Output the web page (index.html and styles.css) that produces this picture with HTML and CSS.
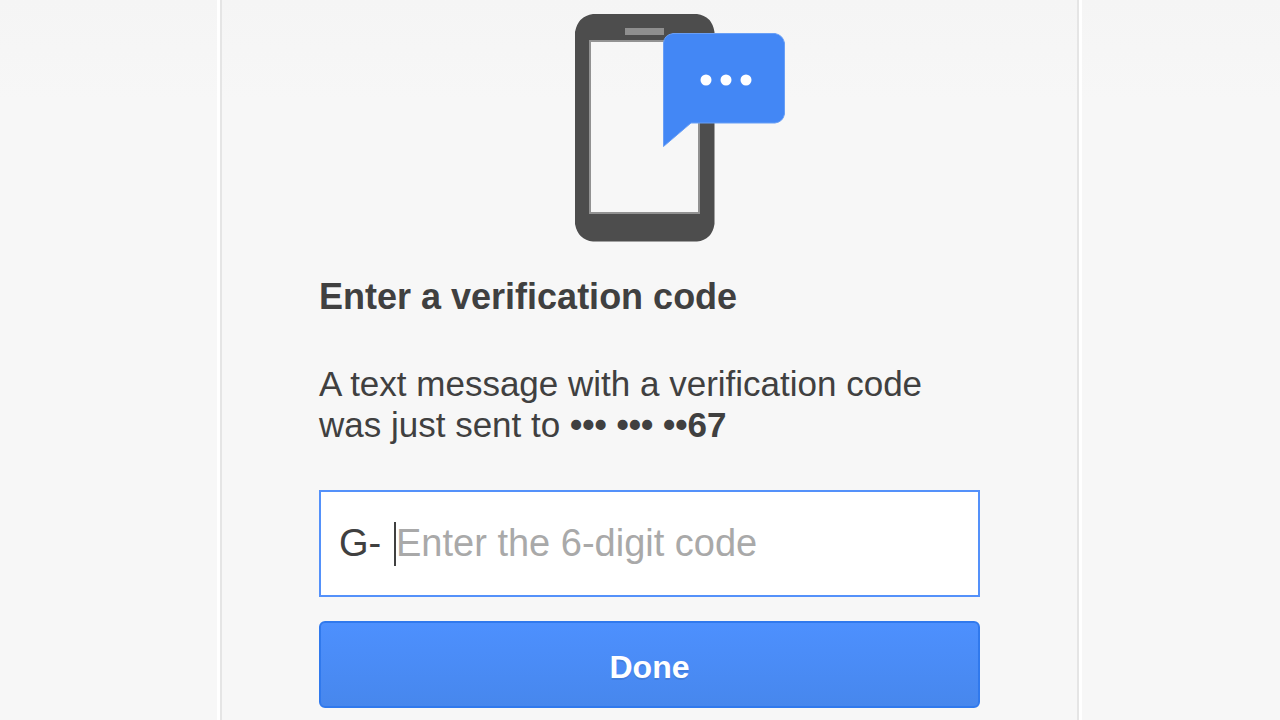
FILE: index.html
```html
<!DOCTYPE html>
<html lang="en">
<head>
<meta charset="utf-8">
<title>Enter a verification code</title>
<link rel="stylesheet" href="styles.css">
</head>
<body>
<main class="card">
  <form class="form">
    <svg class="phone" width="212" height="230" viewBox="574 13 212 230" aria-hidden="true">
      <path fill="#4d4d4d" fill-rule="evenodd" d="M593 14H697Q712 16 714.500 32V224Q712 240 697 241.500H593Q578 240 575 224V32Q578 16 593 14ZM590 41V213H699V41Z"/>
      <path fill="none" stroke="#929292" stroke-width="2" d="M590 41H699V213H590Z"/>
      <path fill="#8f8f8f" d="M625 28H664V35H625Z"/>
      <path fill="#4387f5" stroke="#699ff6" stroke-width="1" d="M663.500 146.500V43Q664 35 673 33.500H775Q783 35 784.500 43V114Q783 122 775 123H691Z"/>
      <g fill="#fff"><circle cx="706" cy="80" r="5.500"/><circle cx="726" cy="80" r="5.500"/><circle cx="746" cy="80" r="5.500"/></g>
    </svg>
    <h1 class="title">Enter a verification code</h1>
    <p class="message">A text message with a verification code<br>was just sent to <strong class="number">••• ••• ••67</strong></p>
    <div class="field">
      <label class="prefix" for="code">G-</label>
      <span class="caret"></span>
      <input class="code" id="code" type="text" inputmode="numeric" placeholder="Enter the 6-digit code">
    </div>
    <button class="done" type="submit">Done</button>
  </form>
</main>
</body>
</html>
```
FILE: styles.css
```css
* {
  box-sizing: border-box;
}

body {
  margin: 0;
  padding: 0 198px 0 217px;
  background: linear-gradient(#f5f5f5, #f7f7f7 100px);
  color: #404040;
  font-family: "Liberation Sans", Arial, sans-serif;
}

.card {
  min-height: 100vh;
  padding: 0 3px;
  background: #fff;
}

.form {
  display: flex;
  flex-direction: column;
  min-height: 100vh;
  padding: 13px 97px 12px;
  border: solid #e5e5e5;
  border-width: 0 2px;
  background: linear-gradient(#f5f5f5, #f7f7f7 100px);
}

.phone {
  align-self: center;
  margin-left: 61px;
}

.title {
  margin: 32px 0 0;
  font-size: 36px;
  line-height: 44px;
}

.message {
  margin: 44px 0 0;
  font-size: 35px;
  line-height: 41px;
  white-space: nowrap;
}

.field {
  display: flex;
  align-items: center;
  height: 107px;
  margin-top: 45px;
  padding: 0 18px;
  border: 2px solid #5491fa;
  background: #fff;
}

.prefix {
  flex: 0 0 55px;
  font-size: 38px;
}

.caret {
  width: 2px;
  height: 44px;
  background: #404040;
}

.code {
  flex: 1;
  min-width: 0;
  padding: 0;
  border: 0;
  outline: 0;
  background: transparent;
  color: #404040;
  font: 38px "Liberation Sans", Arial, sans-serif;
}

.code::placeholder {
  color: #a9a9a9;
  opacity: 1;
}

.done {
  height: 87px;
  margin-top: 24px;
  padding: 6px 0 0;
  border: 2px solid #3079ed;
  border-radius: 6px;
  background: linear-gradient(#4d90fe, #4787ed);
  color: #fff;
  font: bold 32px "Liberation Sans", Arial, sans-serif;
  text-shadow: 0 2px rgba(0, 0, 0, 0.1);
}
```
